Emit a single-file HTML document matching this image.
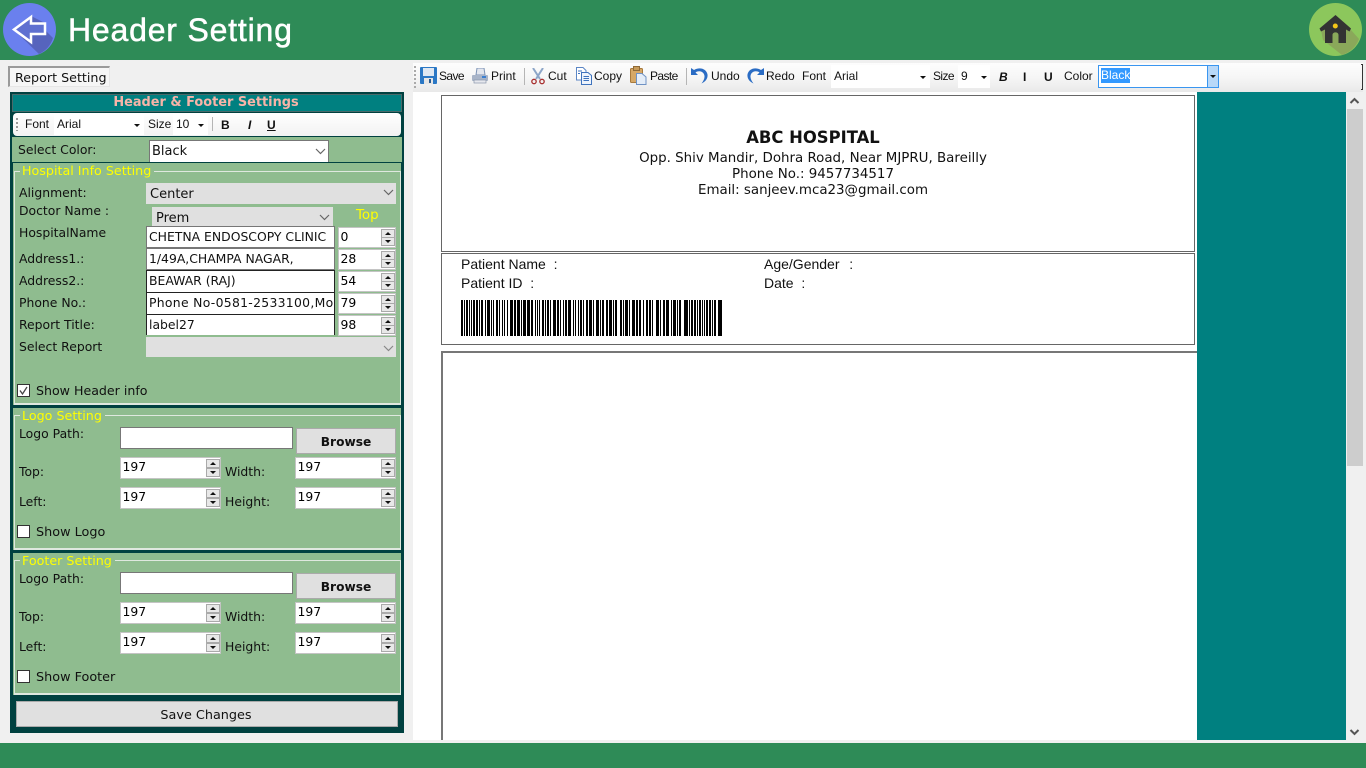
<!DOCTYPE html>
<html><head><meta charset="utf-8"><title>Header Setting</title>
<style>
html,body{margin:0;padding:0}
body{position:relative;width:1366px;height:768px;overflow:hidden;background:#f0f0f0;font-family:"DejaVu Sans","Liberation Sans",sans-serif;font-size:12.4px;color:#111}
div,span,svg{position:absolute;box-sizing:border-box}
.t{white-space:nowrap;line-height:16px;height:16px}
.y{color:#ff0}
.gp{left:13px;width:388px;background:#8fbc8f}
.gb{left:14px;width:387px;border:1px solid #dfe8df;border-bottom-width:2px}
.in{background:#fff;border:1px solid #777;white-space:nowrap;overflow:hidden;padding-left:2px;line-height:20px;font-size:12.4px}
.dk{border-color:#222 #222 #ddd #222;border-width:1.5px 1.5px 0}
.sel{background:#e0e0e0;white-space:nowrap;padding-left:4px;line-height:23px;font-size:13px}
.sp{background:#fff;border:1px solid #c4c4c4;line-height:17px;padding-left:1.5px;font-size:12.4px;color:#000}
.sb{right:0;width:14px;height:9px;background:#e8e8e8;border:1px solid #aaa}
.sb.u{top:1px}.sb.d{bottom:1px}
.sb:after{content:"";position:absolute;left:3px;border-left:3px solid transparent;border-right:3px solid transparent}
.sb.u:after{top:2px;border-bottom:3px solid #111}
.sb.d:after{top:2px;border-top:3px solid #111}
.cb{width:13px;height:13px;background:#fff;border:1px solid #333}
.btn{background:#e0e0e0;border:1px solid #aaa;text-align:center}
.m{font-family:"Liberation Sans",sans-serif;font-size:12px}
.ar{width:0;height:0;border-left:3px solid transparent;border-right:3px solid transparent;border-top:3px solid #111}
.tb{font-family:"Liberation Sans",sans-serif;font-size:12px;color:#111}
.sep{width:1px;background:#b5b5b5}
.rp{font-family:"DejaVu Sans",sans-serif;font-size:13.4px;color:#111;text-align:center;left:441px;width:744px}
.ar13{font-family:"Liberation Sans",sans-serif;font-size:14px;color:#111}
</style></head><body>

<!-- Header -->
<div style="left:0;top:0;width:1366px;height:60px;background:#2e8b57"></div>
<svg style="left:3px;top:3px" width="53" height="53" viewBox="0 0 53 53">
<circle cx="26.5" cy="26.5" r="26.5" fill="#6a80ee"/>
<path d="M28 13L42 20V27L50 35A26.500 26.500 0 0 1 36 51L10 26Z" fill="#5664bd"/>
<path d="M28 14L11 26.500L28 39V31H42V20.500H28Z" fill="#5f70d0" stroke="#fff" stroke-width="2.500" stroke-linejoin="miter"/>
</svg>
<div class="t" style="left:68px;top:11px;height:38px;line-height:38px;font-family:'Liberation Sans',sans-serif;font-size:32px;letter-spacing:.8px;color:#fff;-webkit-text-stroke:.5px #fff">Header Setting</div>
<svg style="left:1309px;top:3px" width="53" height="53" viewBox="0 0 53 53">
<circle cx="26.500" cy="26.500" r="26.500" fill="#8cc75c"/>
<path d="M12 27L27 13L42 27L50 36A26.500 26.500 0 0 1 33 52L14 37Z" fill="#8aa85a"/>
<path d="M10.500 25.500L26.500 12L42 25.500L40.500 28.500L37 26.500V40H29.500V32C29.500 28.500 23.500 28.500 23.500 32V40H16V26.500L12 28.500Z" fill="#333"/>
<circle cx="26.300" cy="23" r="2.500" fill="#f5c518"/>
</svg>

<!-- Tab -->
<div style="left:8px;top:66px;width:102px;height:21px;background:#f6f6f6;border:1px solid #e6e6e6;border-top:2px solid #9a9a9a;border-left:2px solid #9a9a9a"></div>
<div class="t" style="left:15px;top:70px;font-size:12.7px">Report Setting</div>

<!-- Left panel -->
<div style="left:10px;top:92px;width:394px;height:641px;background:#004140"></div>
<div style="left:12px;top:94px;width:390px;height:18px;background:#008080;border:1px solid #4a6a6a"></div>
<div class="t" style="left:12px;top:95px;width:388px;text-align:center;font-weight:bold;font-size:12.9px;color:#f8b4a8">Header &amp; Footer Settings</div>

<!-- Mini toolbar -->
<div style="left:13px;top:113px;width:388px;height:23px;background:linear-gradient(#fff,#f2f2f2);border-radius:4px"></div>
<div style="left:16px;top:118px;width:2px;height:13px;background:repeating-linear-gradient(#999 0 2px,transparent 2px 4px)"></div>
<div class="t m" style="left:25px;top:116px">Font</div>
<div style="left:54px;top:114px;width:90px;height:21px;background:#fff"></div>
<div class="t m" style="left:57px;top:116px">Arial</div>
<div class="ar" style="left:134px;top:124px"></div>
<div class="t m" style="left:148px;top:116px">Size</div>
<div style="left:173px;top:114px;width:35px;height:21px;background:#fff"></div>
<div class="t m" style="left:176px;top:116px">10</div>
<div class="ar" style="left:198px;top:124px"></div>
<div class="sep" style="left:212px;top:117px;height:14px"></div>
<div class="t m" style="left:221px;top:117px;font-weight:bold">B</div>
<div class="t m" style="left:248px;top:117px;font-weight:bold;font-style:italic">I</div>
<div class="t m" style="left:267px;top:117px;font-weight:bold;text-decoration:underline">U</div>

<!-- Select color -->
<div style="left:12px;top:137px;width:390px;height:25px;background:#8fbc8f"></div>
<div class="t" style="left:18px;top:142px">Select Color:</div>
<div class="in" style="left:149px;top:140px;width:180px;height:22px;font-size:13px;border-bottom:0;line-height:22px">Black</div>
<svg style="left:315px;top:148px" width="11" height="7"><path d="M1 1L5.500 5.500L10 1" fill="none" stroke="#666" stroke-width="1.200"/></svg>

<!-- Hospital group -->
<div class="gp" style="top:163px;height:242px"></div>
<div class="gb" style="top:171px;height:234px"></div>
<div class="t y" style="left:20px;top:163px;background:#8fbc8f;padding:0 3px 0 2px;font-size:12.7px">Hospital Info Setting</div>
<div class="t" style="left:19px;top:185px">Alignment:</div>
<div class="sel" style="left:146px;top:183px;width:250px;height:21px">Center</div>
<svg style="left:383px;top:189px" width="11" height="7"><path d="M1 1L5.500 5.500L10 1" fill="none" stroke="#666" stroke-width="1.200"/></svg>
<div class="t" style="left:19px;top:203px">Doctor Name :</div>
<div class="sel" style="left:152px;top:207px;width:181px;height:19px">Prem</div>
<svg style="left:319px;top:214px" width="11" height="7"><path d="M1 1L5.500 5.500L10 1" fill="none" stroke="#666" stroke-width="1.200"/></svg>
<div class="t y" style="left:356px;top:207px;font-size:13.400px;line-height:18px">Top</div>

<div class="t" style="left:19px;top:225px">HospitalName</div>
<div class="t" style="left:19px;top:251px">Address1.:</div>
<div class="t" style="left:19px;top:273px">Address2.:</div>
<div class="t" style="left:19px;top:295px">Phone No.:</div>
<div class="t" style="left:19px;top:317px">Report Title:</div>
<div class="t" style="left:19px;top:339px">Select Report</div>

<div class="in" style="left:146px;top:226px;width:189px;height:22px">CHETNA ENDOSCOPY CLINIC</div>
<div class="in" style="left:146px;top:248px;width:189px;height:22px">1/49A,CHAMPA NAGAR,</div>
<div class="in dk" style="left:146px;top:270px;width:189px;height:22px">BEAWAR (RAJ)</div>
<div class="in dk" style="left:146px;top:292px;width:189px;height:22px;letter-spacing:.3px">Phone No-0581-2533100,Mobile</div>
<div class="in dk" style="left:146px;top:314px;width:189px;height:21px">label27</div>

<div class="sp" style="left:338px;top:227px;width:58px;height:21px;line-height:18px">0<div class="sb u"></div><div class="sb d"></div></div>
<div class="sp" style="left:338px;top:249px;width:58px;height:21px;line-height:18px">28<div class="sb u"></div><div class="sb d"></div></div>
<div class="sp" style="left:338px;top:271px;width:58px;height:21px;line-height:18px">54<div class="sb u"></div><div class="sb d"></div></div>
<div class="sp" style="left:338px;top:293px;width:58px;height:21px;line-height:18px">79<div class="sb u"></div><div class="sb d"></div></div>
<div class="sp" style="left:338px;top:315px;width:58px;height:21px;line-height:18px">98<div class="sb u"></div><div class="sb d"></div></div>

<div class="sel" style="left:146px;top:337px;width:250px;height:20px"></div>
<svg style="left:383px;top:345px" width="11" height="7"><path d="M1 1L5.500 5.500L10 1" fill="none" stroke="#888" stroke-width="1.200"/></svg>

<div class="cb" style="left:17px;top:384px"></div>
<svg style="left:17px;top:384px" width="13" height="13"><path d="M3 6.500L5.500 10L10 3" fill="none" stroke="#444" stroke-width="1.300"/></svg>
<div class="t" style="left:36px;top:383px;font-size:12.6px">Show Header info</div>

<!-- Logo group -->
<div class="gp" style="top:408px;height:142px"></div>
<div class="gb" style="top:415px;height:135px"></div>
<div class="t y" style="left:20px;top:408px;background:#8fbc8f;padding:0 3px 0 2px;font-size:12.7px">Logo Setting</div>
<div class="t" style="left:19px;top:426px">Logo Path:</div>
<div class="in" style="left:120px;top:427px;width:173px;height:22px"></div>
<div class="btn" style="left:296px;top:428px;width:100px;height:26px;font-weight:bold;font-size:12.2px;line-height:26px">Browse</div>
<div class="t" style="left:19px;top:464px">Top:</div>
<div class="t" style="left:225px;top:464px">Width:</div>
<div class="t" style="left:19px;top:494px">Left:</div>
<div class="t" style="left:225px;top:494px">Height:</div>
<div class="sp" style="left:120px;top:457px;width:101px;height:22px">197<div class="sb u"></div><div class="sb d"></div></div>
<div class="sp" style="left:295px;top:457px;width:101px;height:22px">197<div class="sb u"></div><div class="sb d"></div></div>
<div class="sp" style="left:120px;top:487px;width:101px;height:22px">197<div class="sb u"></div><div class="sb d"></div></div>
<div class="sp" style="left:295px;top:487px;width:101px;height:22px">197<div class="sb u"></div><div class="sb d"></div></div>
<div class="cb" style="left:17px;top:525px"></div>
<div class="t" style="left:36px;top:525px;font-size:12.8px">Show Logo</div>

<!-- Footer group -->
<div class="gp" style="top:553px;height:142px"></div>
<div class="gb" style="top:560px;height:135px"></div>
<div class="t y" style="left:20px;top:553px;background:#8fbc8f;padding:0 3px 0 2px;font-size:12.7px">Footer Setting</div>
<div class="t" style="left:19px;top:571px">Logo Path:</div>
<div class="in" style="left:120px;top:572px;width:173px;height:22px"></div>
<div class="btn" style="left:296px;top:573px;width:100px;height:26px;font-weight:bold;font-size:12.2px;line-height:26px">Browse</div>
<div class="t" style="left:19px;top:609px">Top:</div>
<div class="t" style="left:225px;top:609px">Width:</div>
<div class="t" style="left:19px;top:639px">Left:</div>
<div class="t" style="left:225px;top:639px">Height:</div>
<div class="sp" style="left:120px;top:602px;width:101px;height:22px">197<div class="sb u"></div><div class="sb d"></div></div>
<div class="sp" style="left:295px;top:602px;width:101px;height:22px">197<div class="sb u"></div><div class="sb d"></div></div>
<div class="sp" style="left:120px;top:632px;width:101px;height:22px">197<div class="sb u"></div><div class="sb d"></div></div>
<div class="sp" style="left:295px;top:632px;width:101px;height:22px">197<div class="sb u"></div><div class="sb d"></div></div>
<div class="cb" style="left:17px;top:670px"></div>
<div class="t" style="left:36px;top:670px;font-size:12.8px">Show Footer</div>

<div class="btn" style="left:16px;top:701px;width:382px;height:26px;line-height:27px;font-size:12.8px;padding-right:2px">Save Changes</div>

<!-- Right toolbar -->
<div style="left:413px;top:63px;width:950px;height:29px;background:linear-gradient(#fdfdfd,#f6f6f6 50%,#e9e9e9)"></div>
<div style="left:414px;top:66px;width:2px;height:22px;background:repeating-linear-gradient(#aaa 0 2px,transparent 2px 4px)"></div>
<div style="left:1361px;top:64px;width:2px;height:26px;border:1px solid #333;border-left:0;border-width:1px 1px 1px 0"></div>

<svg style="left:420px;top:67px" width="17" height="17" viewBox="0 0 17 17"><rect width="17" height="17" rx="1" fill="#2b78c5"/><rect x="3" y="1" width="11" height="8" fill="#dfe8f2"/><rect x="4" y="11" width="9" height="6" fill="#e6e6e6"/><rect x="9" y="12" width="2" height="4" fill="#2b5c90"/></svg>
<div class="t tb" style="left:439px;top:68px;letter-spacing:-.6px">Save</div>
<svg style="left:472px;top:68px" width="16" height="16" viewBox="0 0 16 16"><path d="M5 0H12L13 7H4Z" fill="#e2e6ee" stroke="#7d93b5"/><rect x="0" y="7" width="16" height="6" rx="1" fill="#a8b4c8"/><rect x="2" y="12" width="12" height="3" fill="#e6e8ee" stroke="#8a96aa" stroke-width=".7"/><rect x="10" y="8" width="4" height="2" fill="#3a7fd0"/></svg>
<div class="t tb" style="left:491px;top:68px">Print</div>
<div class="sep" style="left:524px;top:68px;height:17px"></div>
<svg style="left:531px;top:68px" width="14" height="17" viewBox="0 0 14 17"><path d="M2 0L9 11M12 0L5 11" stroke="#8da6c8" stroke-width="2"/><circle cx="3" cy="13.500" r="2.200" fill="none" stroke="#a83030" stroke-width="1.300"/><circle cx="11" cy="13.500" r="2.200" fill="none" stroke="#a83030" stroke-width="1.300"/></svg>
<div class="t tb" style="left:548px;top:68px">Cut</div>
<svg style="left:576px;top:67px" width="16" height="18" viewBox="0 0 16 18"><path d="M.5 .5H7L10 3.500V13H.5Z" fill="#fff" stroke="#5b86c5"/><path d="M5.500 5.500H12L15.500 8.500V17.500H5.500Z" fill="#eef4fc" stroke="#3f73bd"/><path d="M2 4H6M2 6.500H4M7.500 9.500H13M7.500 11.500H13M7.500 13.500H13" stroke="#3f73bd"/></svg>
<div class="t tb" style="left:594px;top:68px">Copy</div>
<svg style="left:630px;top:66px" width="17" height="19" viewBox="0 0 17 19"><rect x=".5" y="2.500" width="12" height="14" rx="1" fill="#d6a866" stroke="#a87a3c"/><rect x="3.500" y=".5" width="6" height="4" fill="#c79a58" stroke="#8f6a36"/><path d="M6.500 7.500H12L16 11V18.500H6.500Z" fill="#e4edf8" stroke="#6f92c4"/></svg>
<div class="t tb" style="left:650px;top:68px;letter-spacing:-.6px">Paste</div>
<div class="sep" style="left:686px;top:68px;height:17px"></div>
<svg style="left:691px;top:67px" width="17" height="17" viewBox="0 0 17 17"><path d="M0 1V8H7L4.500 5.500C8 3 13 4.500 13.500 9C13.700 11.500 12.500 14 10.500 16.500C15 14.500 17 11 16.500 7.500C15.500 2 9 -.5 3 3Z" fill="#2a6cc4"/></svg>
<div class="t tb" style="left:711px;top:68px">Undo</div>
<svg style="left:747px;top:67px" width="17" height="17" viewBox="0 0 17 17"><path d="M17 1V8H10L12.500 5.500C9 3 4 4.500 3.500 9C3.300 11.500 4.500 14 6.500 16.500C2 14.500 0 11 .5 7.500C1.500 2 8 -.5 14 3Z" fill="#2a6cc4"/></svg>
<div class="t tb" style="left:766px;top:68px">Redo</div>
<div class="t tb" style="left:802px;top:68px">Font</div>
<div style="left:831px;top:65px;width:99px;height:23px;background:#fff"></div>
<div class="t tb" style="left:834px;top:68px">Arial</div>
<div class="ar" style="left:920px;top:76px"></div>
<div class="t tb" style="left:933px;top:68px;letter-spacing:-.6px">Size</div>
<div style="left:958px;top:65px;width:32px;height:23px;background:#fff"></div>
<div class="t tb" style="left:961px;top:68px">9</div>
<div class="ar" style="left:981px;top:76px"></div>
<div class="t tb" style="left:999px;top:69px;font-weight:bold;font-style:italic">B</div>
<div class="t tb" style="left:1023px;top:69px;font-weight:bold">I</div>
<div class="t tb" style="left:1044px;top:69px;font-weight:bold">U</div>
<div class="t tb" style="left:1064px;top:68px">Color</div>
<div style="left:1098px;top:65px;width:121px;height:23px;background:#fff;border:1px solid #3a96f0"></div>
<div class="t tb" style="left:1101px;top:68px;height:15px;width:29px;background:#3399ff;color:#fff;line-height:15px">Black</div>
<div style="left:1207px;top:66px;width:11px;height:21px;background:#b8d8f8;border-left:1px solid #3a96f0"></div>
<div class="ar" style="left:1210px;top:75px"></div>

<!-- Report area -->
<div style="left:413px;top:92px;width:933px;height:648px;background:#fff"></div>
<div style="left:1197px;top:92px;width:149px;height:648px;background:#008080"></div>
<div style="left:441px;top:95px;width:754px;height:157px;border:1px solid #666"></div>
<div style="left:441px;top:253px;width:754px;height:92px;border:1px solid #666"></div>
<div style="left:441px;top:351px;width:756px;height:389px;border:2px solid #777;border-right:0;border-bottom:0"></div>

<div class="t rp" style="top:129px;font-weight:bold;font-size:16.4px;height:18px;line-height:18px">ABC HOSPITAL</div>
<div class="t rp" style="top:149.500px;line-height:16px;margin-top:1.500px">Opp. Shiv Mandir, Dohra Road, Near MJPRU, Bareilly</div>
<div class="t rp" style="top:167px">Phone No.: 9457734517</div>
<div class="t rp" style="top:183px">Email: sanjeev.mca23@gmail.com</div>

<div class="t ar13" style="left:461px;top:256px">Patient Name&nbsp; :</div>
<div class="t ar13" style="left:461px;top:275px">Patient ID&nbsp; :</div>
<div class="t ar13" style="left:764px;top:256px;word-spacing:1px">Age/Gender&nbsp; :</div>
<div class="t ar13" style="left:764px;top:275px">Date&nbsp; :</div>

<svg style="left:461px;top:300px" width="261" height="36"><line x1="0" y1="18" x2="258" y2="18" stroke="#000" stroke-width="36" stroke-dasharray="2 1 1 1 2 1 1 1 1 1 2 1 2 1 1 1 2 2 1 1 3 1 1 1 1 2 2 1 1 2 1 1 1 2 1 2 3 1 2 1 3 1 1 1 3 1 3 1 2 2 1 1 1 1 1 2 2 1 1 1 2 1 1 2 3 1 2 1 1 2 1 1 2 1 3 2 1 1 1 2 1 1 2 1 1 2 2 1 3 1 1 2 3 1 1 1 2 2 2 1 3 1 1 1 2 3 2 1 1 1 3 1 1 2 3 1 2 1 2 2 1 2 2 1 2 1 1 3 3 1 1 2 2 1 3 2 1 1 3 1 1 1 2 3 4 1 1 1 2 1"/><rect x="258" y="0" width="3" height="36"/></svg>

<!-- Scrollbar -->
<div style="left:1346px;top:92px;width:20px;height:648px;background:#f0f0f0"></div>
<div style="left:1347px;top:109px;width:16px;height:357px;background:#cdcdcd"></div>
<svg style="left:1349px;top:97px" width="11" height="8"><path d="M1.500 6L5.500 2L9.500 6" fill="none" stroke="#555" stroke-width="2"/></svg>
<svg style="left:1349px;top:728px" width="11" height="8"><path d="M1.500 2L5.500 6L9.500 2" fill="none" stroke="#555" stroke-width="2"/></svg>

<!-- Footer -->
<div style="left:0;top:743px;width:1366px;height:25px;background:#2e8b57"></div>
</body></html>
